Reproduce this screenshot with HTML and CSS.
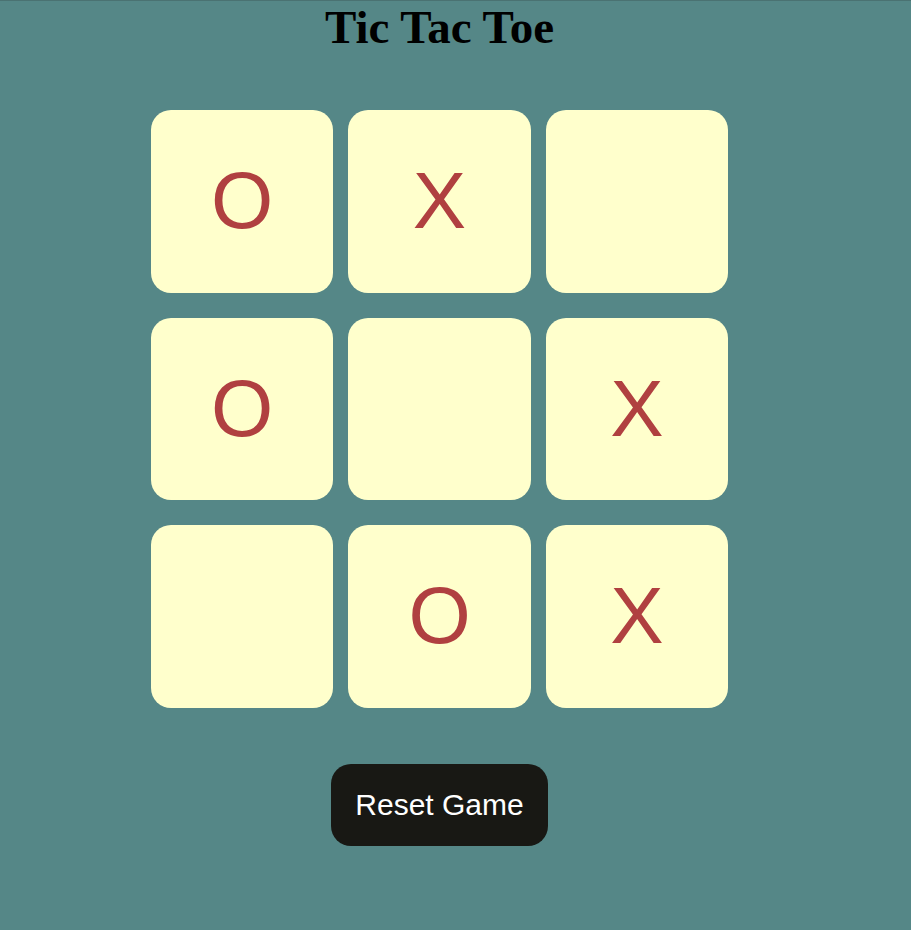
FILE: index.html
```html
<!DOCTYPE html>
<html>
<head>
<meta charset="UTF-8">
<title>Tic Tac Toe</title>
<link rel="stylesheet" href="styles.css">
</head>
<body>
    <div class="game">
        <h1 class="title">Tic Tac Toe</h1>

        <div class="board">
            <button class="cell">O</button>
            <button class="cell">X</button>
            <button class="cell"></button>
            <button class="cell">O</button>
            <button class="cell"></button>
            <button class="cell">X</button>
            <button class="cell"></button>
            <button class="cell">O</button>
            <button class="cell">X</button>
        </div>

        <button class="reset">Reset Game</button>
    </div>
</body>
</html>
```

FILE: styles.css
```css
/* Page */
body{
    margin: 0;
    min-height: 929px;
    background: #558787;
    border-top: 1px solid #4a7272;
}
.game{
    width: 879px;
    display: flex;
    flex-direction: column;
    align-items: center;
}
.title{
    margin: 0;
    font-family: "Liberation Serif", serif;
    font-size: 47px;
    font-weight: bold;
    line-height: 52px;
    color: #000;
}

/* Board */
.board{
    margin-top: 57px;
    display: grid;
    grid-template-columns: repeat(3, 182.5px);
    grid-auto-rows: 182.5px;
    column-gap: 15px;
    row-gap: 25px;
}
.cell{
    padding: 0;
    border: none;
    border-radius: 20px;
    background: #ffffcc;
    color: #b04040;
    font-family: "Liberation Sans", Arial, sans-serif;
    font-size: 80px;
}

/* Reset button */
.reset{
    margin-top: 56px;
    padding: 24px;
    border: none;
    border-radius: 20px;
    background: #181814;
    color: #fff;
    font-family: "Liberation Sans", Arial, sans-serif;
    font-size: 30px;
}
```
